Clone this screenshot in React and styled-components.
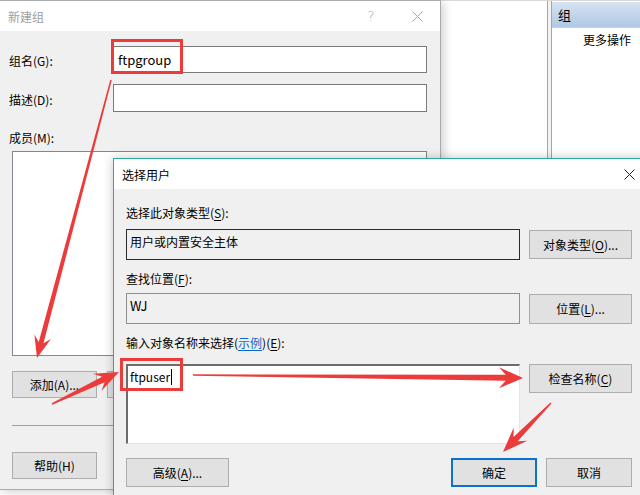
import React from 'react';
import styled, { createGlobalStyle } from 'styled-components';

const GlobalStyle = createGlobalStyle`
  html, body {
    margin: 0;
    padding: 0;
    background: #fff;
  }
  body {
    font-family: "Noto Sans CJK SC", "Noto Sans", sans-serif;
    font-size: 12px;
    color: #000;
  }
  * { box-sizing: border-box; }
`;

const Desktop = styled.div`
  position: relative;
  width: 640px;
  height: 495px;
  overflow: hidden;
  background: #fff;
`;

/* ---------- MMC action pane behind the dialogs ---------- */

const ActionPane = styled.div`
  position: absolute;
  left: 440px;
  top: 0;
  right: 0;
  bottom: 0;
  display: flex;
  border-top: 1px solid #d9d9d9;
`;

const MiddleGap = styled.div`
  width: 107px;
  background: #fff;
`;

const Splitter = styled.div`
  width: 5px;
  background: #f3f3f3;
  border-left: 1px solid #a6a6a6;
  border-right: 1px solid #a6a6a6;
`;

const ActionColumn = styled.div`
  flex: 1;
  display: flex;
  flex-direction: column;
  padding-top: 1px;
`;

const ActionHeader = styled.div`
  height: 26px;
  display: flex;
  align-items: center;
  padding-left: 6px;
  font-size: 13px;
  background: linear-gradient(#d6e3f2, #aec8e5);
  border-bottom: 1px solid #c3d3e6;
`;

const ActionItem = styled.div`
  padding: 4px 0 0 31px;
  line-height: 16px;
  font-size: 12px;
`;

/* ---------- shared window parts ---------- */

const Window = styled.div`
  position: absolute;
  display: flex;
  flex-direction: column;
  background: #f0f0f0;
  border: 1px solid ${(p) => p.$border};
  box-shadow: ${(p) => p.$shadow};
`;

const TitleBar = styled.div`
  height: 30px;
  flex-shrink: 0;
  display: flex;
  align-items: center;
  background: #fff;
`;

const TitleText = styled.span`
  flex: 1;
  padding-left: 8px;
  font-size: 12px;
  color: ${(p) => (p.$inactive ? '#a0a0a0' : '#000')};
`;

const CaptionButton = styled.span`
  width: 46px;
  height: 30px;
  display: flex;
  align-items: center;
  justify-content: center;
  color: #a8a8a8;
  font-size: 14px;
  font-family: "DejaVu Sans", sans-serif;
  font-weight: 300;
`;

const Button = styled.div`
  width: ${(p) => p.$w}px;
  height: ${(p) => p.$h || 27}px;
  flex-shrink: 0;
  display: flex;
  align-items: center;
  justify-content: center;
  background: #e1e1e1;
  border: ${(p) => (p.$default ? '2px solid #0c72d0' : '1px solid #adadad')};
  font-size: 12px;
  color: #000;
  white-space: nowrap;
`;

const U = styled.span`
  text-decoration: underline;
  text-underline-offset: 2px;
`;

const Link = styled.span`
  color: #1166cc;
  text-decoration: underline;
  text-underline-offset: 2px;
`;

function CloseGlyph({ color }) {
  return (
    <svg width="11" height="11" viewBox="0 0 11 11">
      <path d="M0.5 0.5 L10.5 10.5 M10.5 0.5 L0.5 10.5" stroke={color} strokeWidth="1" fill="none" />
    </svg>
  );
}

/* ---------- dialog 1: 新建组 ---------- */

const GroupBody = styled.div`
  display: flex;
  flex-direction: column;
  padding: 15px 0 0 12px;
`;

const FormRow = styled.div`
  display: grid;
  grid-template-columns: 101px 314px;
  align-items: center;
  margin-top: ${(p) => p.$mt || 0}px;
`;

const FormLabel = styled.span`
  margin-left: -3px;
  line-height: 18px;
  padding-top: ${(p) => p.$pt || 0}px;
`;

const TextInput = styled.div`
  height: ${(p) => p.$h || 27}px;
  display: flex;
  align-items: center;
  padding-left: 4px;
  background: #fff;
  border: 1px solid #7a7a7a;
  font-size: 13px;
`;

const MembersLabel = styled.div`
  margin: 17px 0 0 -3px;
  line-height: 18px;
`;

const MembersList = styled.div`
  width: 415px;
  height: 205px;
  margin-top: 4px;
  background: #fff;
  border: 1px solid #828790;
`;

const ButtonRow = styled.div`
  display: flex;
  gap: 10px;
  margin-top: ${(p) => p.$mt || 0}px;
`;

const Separator = styled.div`
  width: 415px;
  height: 1px;
  margin-top: 27px;
  background: #a0a0a0;
`;

function NewGroupDialog() {
  return (
    <Window
      $border="#ababab"
      $shadow="3px 2px 9px rgba(0,0,0,0.18)"
      style={{ left: -1, top: 0, width: 442, height: 490 }}
    >
      <TitleBar>
        <TitleText $inactive>新建组</TitleText>
        <CaptionButton>?</CaptionButton>
        <CaptionButton>
          <CloseGlyph color="#a8a8a8" />
        </CaptionButton>
      </TitleBar>
      <GroupBody>
        <FormRow>
          <FormLabel $pt={3}>组名(G):</FormLabel>
          <TextInput>ftpgroup</TextInput>
        </FormRow>
        <FormRow $mt={11}>
          <FormLabel $pt={3}>描述(D):</FormLabel>
          <TextInput $h={28} />
        </FormRow>
        <MembersLabel>成员(M):</MembersLabel>
        <MembersList />
        <ButtonRow $mt={15}>
          <Button $w={85}>添加(A)...</Button>
          {/* second button sits under the 选择用户 dialog, only its edge shows */}
          <Button $w={85} />
        </ButtonRow>
        <Separator />
        <ButtonRow $mt={26}>
          <Button $w={85}>帮助(H)</Button>
        </ButtonRow>
      </GroupBody>
    </Window>
  );
}

/* ---------- dialog 2: 选择用户 ---------- */

const PickerBody = styled.div`
  display: flex;
  flex-direction: column;
  padding: 16px 0 0 12px;
`;

const SectionLabel = styled.div`
  line-height: 16px;
  margin-top: ${(p) => p.$mt || 0}px;
`;

const PickerRow = styled.div`
  display: grid;
  grid-template-columns: 394px 103px;
  column-gap: 9px;
  align-items: ${(p) => p.$align || 'center'};
  margin-top: ${(p) => p.$mt || 0}px;
`;

const ReadOnlyBox = styled.div`
  height: 31px;
  padding: 3px 0 0 3px;
  line-height: 18px;
  background: #f0f0f0;
  border: 1px solid ${(p) => (p.$dark ? '#2b2b2b' : '#8f8f8f')};
  font-size: ${(p) => p.$fs || 12}px;
`;

const NameArea = styled.div`
  height: 80px;
  padding: 2px 0 0 2px;
  line-height: 18px;
  background: #fff;
  border-top: 2px solid #6c6c6c;
  border-left: 2px solid #6c6c6c;
  border-right: 1px solid #e3e3e3;
  border-bottom: 1px solid #e3e3e3;
  font-size: 12px;
  display: flex;
  align-items: flex-start;
`;

const Caret = styled.span`
  display: inline-block;
  width: 1px;
  height: 16px;
  margin: 1px 0 0 1px;
  background: #000;
`;

const FooterRow = styled.div`
  width: 506px;
  display: flex;
  justify-content: space-between;
  margin-top: 14px;
`;

const FooterGroup = styled.div`
  display: flex;
  gap: 9px;
`;

function SelectUserDialog() {
  return (
    <Window
      $border="#2fa99d"
      $shadow="0 0 10px rgba(0,0,0,0.22)"
      style={{ left: 113, top: 158, width: 540, height: 345 }}
    >
      <TitleBar>
        <TitleText>选择用户</TitleText>
        <CaptionButton>
          <CloseGlyph color="#222" />
        </CaptionButton>
      </TitleBar>
      <PickerBody>
        <SectionLabel>
          选择此对象类型(<U>S</U>):
        </SectionLabel>
        <PickerRow $mt={8}>
          <ReadOnlyBox $dark>用户或内置安全主体</ReadOnlyBox>
          <Button $w={103} $h={29}>
            对象类型(<U>O</U>)...
          </Button>
        </PickerRow>
        <SectionLabel $mt={11}>
          查找位置(<U>F</U>):
        </SectionLabel>
        <PickerRow $mt={6}>
          <ReadOnlyBox $fs={13}>WJ</ReadOnlyBox>
          <Button $w={103} $h={30}>
            位置(<U>L</U>)...
          </Button>
        </PickerRow>
        <SectionLabel $mt={11}>
          输入对象名称来选择(<Link>示例</Link>)(<U>E</U>):
        </SectionLabel>
        <PickerRow $mt={13} $align="start">
          <NameArea>
            ftpuser
            <Caret />
          </NameArea>
          <Button $w={103} $h={29}>
            检查名称(<U>C</U>)
          </Button>
        </PickerRow>
        <FooterRow>
          <Button $w={103} $h={29}>
            高级(<U>A</U>)...
          </Button>
          <FooterGroup>
            <Button $w={86} $h={29} $default>
              确定
            </Button>
            <Button $w={86} $h={29}>
              取消
            </Button>
          </FooterGroup>
        </FooterRow>
      </PickerBody>
    </Window>
  );
}

/* ---------- red annotation layer ---------- */

const Annotations = styled.svg`
  position: absolute;
  left: 0;
  top: 0;
  pointer-events: none;
`;

const RED = '#ec3b3b';

function arrowPoints([x1, y1], [x2, y2], { tail = 1.5, neck = 5, head = 22, wing = 18 } = {}) {
  const dx = x2 - x1;
  const dy = y2 - y1;
  const len = Math.hypot(dx, dy);
  const ux = dx / len;
  const uy = dy / len;
  const nx = -uy;
  const ny = ux;
  const bx = x2 - ux * head;
  const by = y2 - uy * head;
  const cx = x2 - ux * head * 0.72;
  const cy = y2 - uy * head * 0.72;
  const pts = [
    [x1 + (nx * tail) / 2, y1 + (ny * tail) / 2],
    [cx + (nx * neck) / 2, cy + (ny * neck) / 2],
    [bx + (nx * wing) / 2, by + (ny * wing) / 2],
    [x2, y2],
    [bx - (nx * wing) / 2, by - (ny * wing) / 2],
    [cx - (nx * neck) / 2, cy - (ny * neck) / 2],
    [x1 - (nx * tail) / 2, y1 - (ny * tail) / 2],
  ];
  return pts.map((p) => p.map((v) => v.toFixed(1)).join(',')).join(' ');
}

const arrows = [
  { from: [111, 80], to: [37, 358], opts: { tail: 1.5, neck: 5, head: 22, wing: 17 } },
  { from: [52, 404], to: [119, 372], opts: { tail: 1.5, neck: 6, head: 24, wing: 19 } },
  { from: [193, 375], to: [523, 378], opts: { tail: 1.5, neck: 6, head: 24, wing: 21 } },
  { from: [551, 403], to: [503, 452], opts: { tail: 1.5, neck: 6, head: 25, wing: 19 } },
];

function RedMarks() {
  return (
    <Annotations width="640" height="495" viewBox="0 0 640 495">
      <rect x="112.5" y="40.5" width="69" height="32" fill="none" stroke={RED} strokeWidth="3" />
      <rect x="121.5" y="359.5" width="60" height="30" fill="none" stroke={RED} strokeWidth="3" />
      {arrows.map((a, i) => (
        <polygon key={i} points={arrowPoints(a.from, a.to, a.opts)} fill={RED} />
      ))}
    </Annotations>
  );
}

export default function App() {
  return (
    <>
      <GlobalStyle />
      <Desktop>
        <ActionPane>
          <MiddleGap />
          <Splitter />
          <ActionColumn>
            <ActionHeader>组</ActionHeader>
            <ActionItem>更多操作</ActionItem>
          </ActionColumn>
        </ActionPane>
        <NewGroupDialog />
        <SelectUserDialog />
        <RedMarks />
      </Desktop>
    </>
  );
}
